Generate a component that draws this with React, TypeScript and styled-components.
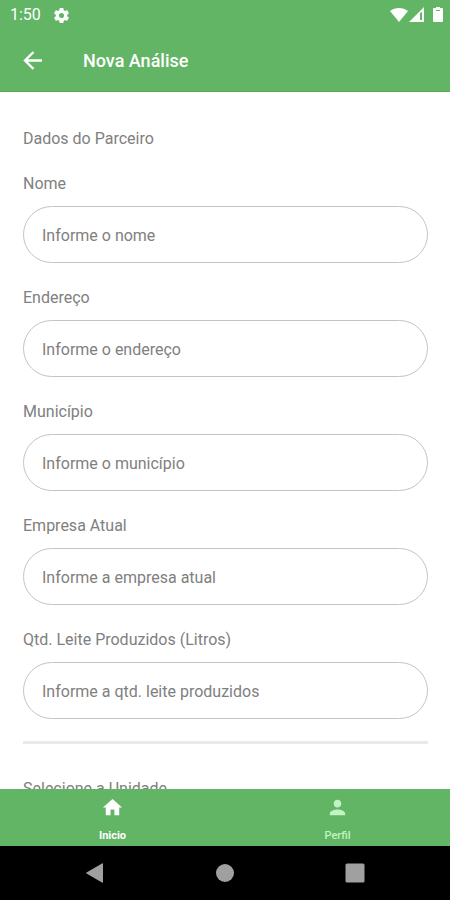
import React from "react";
import styled, { createGlobalStyle } from "styled-components";

const green = "#61b565";

const GlobalStyle = createGlobalStyle`
  * { box-sizing: border-box; }
  body {
    margin: 0;
    background: #fff;
    font-family: Roboto, "Liberation Sans", sans-serif;
  }
`;

const Screen = styled.div`
  display: flex;
  flex-direction: column;
  height: 100vh;
`;

const TopArea = styled.header`
  flex: none;
  background: ${green};
  color: #fff;
  border-bottom: 1px solid #57ab5b;
`;

const StatusBar = styled.div`
  display: flex;
  align-items: center;
  justify-content: space-between;
  height: 30px;
  padding: 0 6px 0 10px;
  font-size: 16px;
  line-height: 20px;
`;

const StatusGroup = styled.div<{ $gap: number }>`
  display: flex;
  align-items: center;
  gap: ${({ $gap }) => $gap}px;
`;

const Toolbar = styled.div`
  display: flex;
  align-items: center;
  gap: 37px;
  height: 61px;
  padding: 0 20px;
`;

const Title = styled.h1`
  margin: 0;
  font-size: 18px;
  font-weight: 500;
  line-height: 24px;
`;

const BackButton = styled.button`
  display: flex;
  padding: 0;
  border: 0;
  background: none;
  color: inherit;
  cursor: pointer;
`;

const Content = styled.main`
  flex: 1;
  min-height: 0;
  overflow-y: auto;
  scrollbar-width: none;
  padding: 37px 22px 24px 23px;
`;

const SectionTitle = styled.h2`
  margin: 0 0 25px;
  color: #808080;
  font-size: 16px;
  font-weight: 400;
  line-height: 20px;
`;

const Form = styled.form`
  display: flex;
  flex-direction: column;
  gap: 25px;
`;

const Field = styled.div`
  display: flex;
  flex-direction: column;
  gap: 12px;
`;

const Label = styled.label`
  color: #808080;
  font-size: 16px;
  line-height: 20px;
`;

const TextInput = styled.input`
  width: 100%;
  height: 57px;
  padding: 2px 18px 0;
  border: 1px solid #c4c4c4;
  border-radius: 29px;
  background: #fff;
  color: #444;
  font: inherit;
  font-size: 16px;
  &::placeholder {
    color: #808080;
    opacity: 1;
  }
`;

const Divider = styled.hr`
  height: 3px;
  margin: 22px 0 35px;
  border: 0;
  background: #e9e9e9;
`;

const TabBar = styled.nav`
  flex: none;
  display: flex;
  height: 57px;
  background: ${green};
`;

const Tab = styled.a<{ $active?: boolean }>`
  flex: 1;
  display: flex;
  flex-direction: column;
  align-items: center;
  gap: 10px;
  padding-top: 7px;
  color: ${({ $active }) => ($active ? "#fff" : "#c0f5c2")};
  font-size: 11px;
  font-weight: ${({ $active }) => ($active ? 700 : 500)};
  line-height: 14px;
  text-decoration: none;
`;

const SystemBar = styled.footer`
  flex: none;
  display: flex;
  align-items: center;
  justify-content: center;
  gap: 106px;
  height: 54px;
  background: #000;
`;

const SystemButton = styled.button`
  display: flex;
  padding: 0;
  border: 0;
  background: none;
  color: #a0a0a0;
  cursor: pointer;
`;

const fields = [
  { id: "nome", label: "Nome", placeholder: "Informe o nome" },
  { id: "endereco", label: "Endereço", placeholder: "Informe o endereço" },
  { id: "municipio", label: "Município", placeholder: "Informe o município" },
  { id: "empresa", label: "Empresa Atual", placeholder: "Informe a empresa atual" },
  { id: "leite", label: "Qtd. Leite Produzidos (Litros)", placeholder: "Informe a qtd. leite produzidos" },
];

const Icon = ({ path, size }: { path: string; size: number }) => (
  <svg width={size} height={size} viewBox="0 0 24 24" fill="currentColor" aria-hidden="true">
    <path d={path} />
  </svg>
);

const gearPath =
  "M19.14 12.94c.04-.3.06-.61.06-.94 0-.32-.02-.64-.07-.94l2.03-1.58c.18-.14.23-.41.12-.61l-1.92-3.32c-.12-.22-.37-.29-.59-.22l-2.39.96c-.5-.38-1.03-.7-1.62-.94l-.36-2.54c-.04-.24-.24-.41-.48-.41h-3.84c-.24 0-.43.17-.47.41l-.36 2.54c-.59.24-1.13.57-1.62.94l-2.39-.96c-.22-.08-.47 0-.59.22L2.74 8.87c-.12.21-.08.47.12.61l2.03 1.58c-.05.3-.09.63-.09.94s.02.64.07.94l-2.03 1.58c-.18.14-.23.41-.12.61l1.92 3.32c.12.22.37.29.59.22l2.39-.96c.5.38 1.03.7 1.62.94l.36 2.54c.05.24.24.41.48.41h3.84c.24 0 .44-.17.47-.41l.36-2.54c.59-.24 1.13-.56 1.62-.94l2.39.96c.22.08.47 0 .59-.22l1.92-3.32c.12-.22.07-.47-.12-.61l-2.01-1.58zM12 15.2a3.2 3.2 0 1 1 0-6.4 3.2 3.2 0 0 1 0 6.4z";
const personPath =
  "M12 12c2.21 0 4-1.79 4-4s-1.79-4-4-4-4 1.79-4 4 1.79 4 4 4zm0 2c-2.67 0-8 1.34-8 4v2h16v-2c0-2.66-5.33-4-8-4z";

export default function App() {
  return (
    <Screen>
      <GlobalStyle />
      <TopArea>
        <StatusBar>
          <StatusGroup $gap={11}>
            <span>1:50</span>
            <Icon path={gearPath} size={19} />
          </StatusGroup>
          <StatusGroup $gap={1}>
            <svg width="18" height="16" viewBox="0 0 18 16" fill="currentColor" aria-hidden="true">
              <path d="M0 4C5 0 13 0 18 4L9 15Z" />
            </svg>
            <svg width="16" height="16" viewBox="0 0 16 16" fill="currentColor" aria-hidden="true">
              <path fillRule="evenodd" d="M0 15L15 0V15ZM11 6V13H13V5Z" />
            </svg>
            <svg width="18" height="16" viewBox="0 0 18 16" fill="currentColor" aria-hidden="true">
              <path d="M10 0h4v1h2q1 0 1 1v12q0 1-1 1H8q-1 0-1-1V2q0-1 1-1h2Z" />
              <path d="M10 3h4v1h-4z" fill={green} />
            </svg>
          </StatusGroup>
        </StatusBar>
        <Toolbar>
          <BackButton type="button" aria-label="Voltar">
            <svg width="26" height="26" viewBox="0 0 26 26" fill="none" stroke="currentColor" strokeWidth="2.4" aria-hidden="true">
              <path d="M22 12.5H5M13.5 4L5 12.5L13.5 21" />
            </svg>
          </BackButton>
          <Title>Nova Análise</Title>
        </Toolbar>
      </TopArea>
      <Content>
        <SectionTitle>Dados do Parceiro</SectionTitle>
        <Form>
          {fields.map(({ id, label, placeholder }) => (
            <Field key={id}>
              <Label htmlFor={id}>{label}</Label>
              <TextInput id={id} name={id} type="text" placeholder={placeholder} />
            </Field>
          ))}
        </Form>
        <Divider />
        <SectionTitle>Selecione a Unidade</SectionTitle>
      </Content>
      <TabBar>
        <Tab href="#inicio" $active aria-current="page">
          <Icon path="M10 20v-6h4v6h5v-8h3L12 3 2 12h3v8z" size={23} />
          <span>Inicio</span>
        </Tab>
        <Tab href="#perfil">
          <Icon path={personPath} size={23} />
          <span>Perfil</span>
        </Tab>
      </TabBar>
      <SystemBar>
        <SystemButton type="button" aria-label="Voltar no sistema">
          <svg width="24" height="24" viewBox="0 0 24 24" fill="currentColor" aria-hidden="true">
            <path d="M20 3v18q0 1-1 .5L3.5 12.5q-1-.5 0-1L19 2.5q1-.5 1 .5Z" />
          </svg>
        </SystemButton>
        <SystemButton type="button" aria-label="Tela inicial">
          <svg width="24" height="24" viewBox="0 0 24 24" fill="currentColor" aria-hidden="true">
            <circle cx="12" cy="12" r="9" />
          </svg>
        </SystemButton>
        <SystemButton type="button" aria-label="Aplicativos recentes">
          <svg width="24" height="24" viewBox="0 0 24 24" fill="currentColor" aria-hidden="true">
            <rect x="2.5" y="2.5" width="19" height="19" rx="1.5" />
          </svg>
        </SystemButton>
      </SystemBar>
    </Screen>
  );
}
